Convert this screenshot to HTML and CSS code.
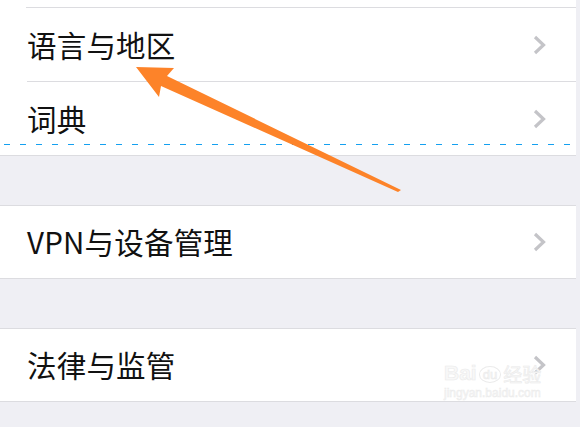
FILE: index.html
```html
<!DOCTYPE html>
<html lang="zh-CN">
<head>
<meta charset="utf-8">
<link rel="stylesheet" href="styles.css">
</head>
<body>
<div class="page">
  <div class="list">
    <div class="group first">
      <div class="stub"></div>
      <div class="row">
        <span class="label">语言与地区</span>
        <svg class="chev" viewBox="0 0 13 20"><polyline points="2,2 10.5,10 2,18"/></svg>
      </div>
      <div class="row last">
        <span class="label">词典</span>
        <svg class="chev" viewBox="0 0 13 20"><polyline points="2,2 10.5,10 2,18"/></svg>
      </div>
    </div>
    <div class="group">
      <div class="row last">
        <span class="label">VPN与设备管理</span>
        <svg class="chev" viewBox="0 0 13 20"><polyline points="2,2 10.5,10 2,18"/></svg>
      </div>
    </div>
    <div class="group">
      <div class="row last">
        <span class="label">法律与监管</span>
        <svg class="chev" viewBox="0 0 13 20"><polyline points="2,2 10.5,10 2,18"/></svg>
      </div>
    </div>
  </div>
  <div class="dash"></div>
  <svg class="arrow" viewBox="0 0 580 427">
    <polygon points="136,67 174,68 167,76 401,190 398,192 161,86 159,97"/>
  </svg>
  <div class="mark">
    <div class="mark-top"><span class="bai">Bai</span><span class="du">du</span><span class="jy">经验</span></div>
    <div class="mark-url">jingyan.baidu.com</div>
  </div>
</div>
</body>
</html>
```
FILE: styles.css
```css
html, body {
  margin: 0;
  padding: 0;
  background: #efeff4;
}
.page {
  position: relative;
  width: 580px;
  height: 427px;
  overflow: hidden;
  font-family: "Noto Sans CJK SC", "Noto Sans", sans-serif;
}
.list {
  width: 576px;
  display: flex;
  flex-direction: column;
}
.group {
  background: #fff;
  border-top: 1px solid #dcdce0;
  border-bottom: 1px solid #dcdce0;
  margin-top: 49px;
  display: flex;
  flex-direction: column;
}
.group.first {
  margin-top: 0;
  border-top: none;
}
.stub {
  height: 7px;
  margin-left: 26px;
  border-bottom: 1px solid #dcdce0;
}
.row {
  height: 72px;
  margin-left: 27px;
  padding-right: 30px;
  display: flex;
  align-items: center;
  justify-content: space-between;
  border-bottom: 1px solid #dcdce0;
}
.first .row {
  height: 73px;
}
.row.last {
  border-bottom: none;
}
.label {
  font-size: 29.5px;
  color: #111;
  line-height: 1;
  letter-spacing: 0.2px;
}
.chev {
  width: 13px;
  height: 20px;
  fill: none;
  stroke: #c4c4c8;
  stroke-width: 3.2;
}
.dash {
  position: absolute;
  left: 4px;
  top: 144px;
  width: 568px;
  height: 1px;
  background: repeating-linear-gradient(to right, #14a0f0 0 6px, transparent 6px 16px);
}
.arrow {
  position: absolute;
  left: 0;
  top: 0;
  width: 580px;
  height: 427px;
  fill: #fd8329;
}
.mark {
  position: absolute;
  left: 444px;
  top: 362px;
  width: 104px;
  color: #f8f8f8;
  text-align: center;
  font-family: "Liberation Sans", sans-serif;
  -webkit-text-stroke: 0.6px #ebebeb;
}
.mark-top {
  display: flex;
  align-items: flex-end;
  gap: 2px;
  line-height: 1;
}
.bai {
  font-size: 21px;
  font-weight: bold;
}
.du {
  font-size: 13px;
  border: 1px solid #ebebeb;
  border-radius: 50%;
  padding: 1px 3px;
}
.jy {
  font-family: "Noto Sans CJK SC", sans-serif;
  font-size: 19px;
}
.mark-url {
  font-size: 12px;
  margin-top: 3px;
  text-align: left;
  -webkit-text-stroke: 0.5px #ebebeb;
}
```
